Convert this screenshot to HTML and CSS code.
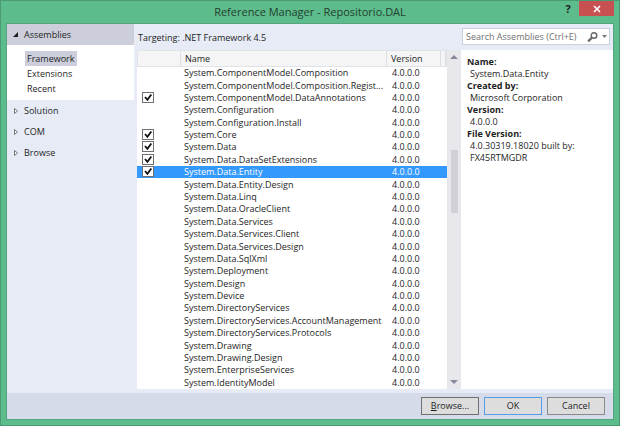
FILE: index.html
```html
<!DOCTYPE html>
<html lang="en">
<head>
<meta charset="utf-8">
<title>Reference Manager - Repositorio.DAL</title>
<link rel="stylesheet" href="styles.css">
</head>
<body>
<div class="window">
  <header class="titlebar">
    <h1>Reference Manager - Repositorio.DAL</h1>
    <div class="window-buttons">
      <button class="help" type="button">?</button>
      <button class="close" type="button" aria-label="Close"><svg width="8" height="8" viewBox="0 0 8 8"><path d="M1 1l6 6M7 1L1 7" stroke="#fff" stroke-width="1.6"/></svg></button>
    </div>
  </header>
  <div class="client">
    <main class="content">
      <nav class="sidebar">
        <button class="group open" type="button"><svg width="8" height="8" viewBox="0 0 8 8"><path d="M6 1v5H1z" fill="#1e1e1e"/></svg>Assemblies</button>
        <ul class="subitems">
          <li><a class="current" href="#framework">Framework</a></li>
          <li><a href="#extensions">Extensions</a></li>
          <li><a href="#recent">Recent</a></li>
        </ul>
        <button class="group" type="button"><svg width="8" height="8" viewBox="0 0 8 8"><path d="M2.5 1.5l3 2.5-3 2.5z" fill="#fff" stroke="#777"/></svg>Solution</button>
        <button class="group" type="button"><svg width="8" height="8" viewBox="0 0 8 8"><path d="M2.5 1.5l3 2.5-3 2.5z" fill="#fff" stroke="#777"/></svg>COM</button>
        <button class="group" type="button"><svg width="8" height="8" viewBox="0 0 8 8"><path d="M2.5 1.5l3 2.5-3 2.5z" fill="#fff" stroke="#777"/></svg>Browse</button>
      </nav>
      <section class="assemblies">
        <p class="targeting">Targeting: .NET Framework 4.5</p>
        <div class="list">
          <table>
            <thead><tr><th></th><th>Name</th><th>Version</th><th></th></tr></thead>
            <tbody id="rows"></tbody>
          </table>
          <div class="scrollbar">
            <svg width="8" height="4" viewBox="0 0 8 4"><path d="M0 4l4-4 4 4z" fill="#868999"/></svg>
            <div class="track"><div class="thumb"></div></div>
            <svg width="8" height="4" viewBox="0 0 8 4"><path d="M0 0l4 4 4-4z" fill="#868999"/></svg>
          </div>
        </div>
      </section>
      <aside class="side">
        <div class="search">
          <input type="text" placeholder="Search Assemblies (Ctrl+E)" aria-label="Search Assemblies">
          <svg width="12" height="12" viewBox="0 0 12 12"><circle cx="7" cy="4.5" r="2.8" fill="none" stroke="#666" stroke-width="1.4"/><path d="M4.8 6.8L1.2 10.4" stroke="#666" stroke-width="2.2"/></svg>
          <svg width="5" height="3" viewBox="0 0 5 3"><path d="M0 0h5L2.5 3z" fill="#777"/></svg>
        </div>
        <dl class="details">
          <dt>Name:</dt><dd>System.Data.Entity</dd>
          <dt>Created by:</dt><dd>Microsoft Corporation</dd>
          <dt>Version:</dt><dd>4.0.0.0</dd>
          <dt>File Version:</dt><dd>4.0.30319.18020 built by: FX45RTMGDR</dd>
        </dl>
      </aside>
    </main>
    <footer class="actions">
      <button class="browse" type="button"><u>B</u>rowse...</button>
      <button class="ok" type="button">OK</button>
      <button type="button">Cancel</button>
    </footer>
  </div>
</div>
<script src="app.js"></script>
</body>
</html>
```
FILE: styles.css
```css
* { box-sizing: border-box; margin: 0; padding: 0; }
body {
  font: 9px/12px "Open Sans", "Noto Sans", sans-serif;
  color: #1e1e1e;
}
button, input { font: inherit; color: inherit; border: 0; background: none; }
svg { display: block; flex: none; }
.window {
  display: flex;
  flex-direction: column;
  height: 100vh;
  padding: 0 5px 5px;
  background: #5cbc8c;
  border: 1px solid #4a9b73;
}
.titlebar {
  display: grid;
  grid-template-columns: 1fr auto 1fr;
  height: 22px;
  flex: none;
}
.titlebar h1 {
  grid-column: 2;
  font-size: 11px;
  font-weight: 400;
  line-height: 22px;
  color: #24402f;
}
.window-buttons { display: flex; justify-content: flex-end; align-items: start; }
.help { width: 22px; height: 15px; font-size: 11px; font-weight: 700; }
.close {
  display: flex;
  align-items: center;
  justify-content: center;
  width: 35px;
  height: 15px;
  background: #c75050;
}
.client {
  display: flex;
  flex-direction: column;
  flex: 1;
  min-height: 0;
  background: #e6ebf5;
  border: 1px solid #52a57c;
}
.content { display: flex; flex: 1; min-height: 0; padding-bottom: 4px; }
.sidebar { width: 127px; flex: none; }
.group {
  display: flex;
  align-items: center;
  gap: 4px;
  width: 100%;
  height: 21px;
  padding-left: 5px;
}
.group.open { background: #cccedb; }
.subitems {
  list-style: none;
  height: 55px;
  padding: 6px 0 0 18px;
  background: #fff;
}
.subitems li { height: 15px; }
.subitems a {
  display: inline-block;
  height: 15px;
  line-height: 15px;
  padding: 0 2px;
  color: inherit;
  text-decoration: none;
}
.subitems .current { background: #cccedb; }
.assemblies {
  display: flex;
  flex-direction: column;
  flex: 1;
  min-width: 0;
  padding-left: 3px;
}
.targeting { height: 26px; line-height: 28px; padding-left: 1px; flex: none; }
.list { display: flex; flex: 1; min-height: 0; background: #fff; }
table { display: flex; flex-direction: column; flex: 1; min-width: 0; }
thead { display: block; flex: none; }
tbody { display: grid; flex: 1; grid-auto-rows: 1fr; min-height: 0; }
tr {
  display: grid;
  grid-template-columns: 43px 1fr 54px 5px;
  align-items: center;
  min-height: 0;
}
thead tr { height: 17px; align-items: stretch; background: #f5f5f5; border: 1px solid #e0e3e8; }
th {
  font-weight: 400;
  text-align: left;
  line-height: 16px;
  padding-left: 4px;
  border-right: 1px solid #dcdfe6;
}
td {
  display: block;
  height: 12px;
  padding-left: 4px;
  overflow: hidden;
  white-space: nowrap;
  text-overflow: ellipsis;
}
td:first-child { padding-left: 5px; }
.selected { background: #3399ff; color: #fff; }
td input {
  appearance: none;
  display: block;
  width: 12px;
  height: 11px;
  border: 1px solid #707070;
  background: #fff url("data:image/svg+xml,%3Csvg xmlns='http://www.w3.org/2000/svg' viewBox='0 0 10 9'%3E%3Cpath d='M2 4l2.4 2.8L8.3 1.5' fill='none' stroke='%23111' stroke-width='1.8'/%3E%3C/svg%3E") center / 10px 9px no-repeat;
}
.scrollbar {
  display: flex;
  flex-direction: column;
  align-items: center;
  width: 14px;
  flex: none;
  padding: 5px 0;
  background: #e8e8ec;
}
.track {
  display: grid;
  grid-template-rows: 91fr 63fr 167fr;
  flex: 1;
}
.thumb { grid-row: 2; width: 7px; background: #d0d1d7; }
.side { display: flex; flex-direction: column; width: 152px; flex: none; }
.search {
  display: flex;
  align-items: center;
  gap: 3px;
  height: 17px;
  margin: 4px 3px 5px 1px;
  padding: 0 2px 0 3px;
  background: #fff;
  border: 1px solid #cccedb;
}
.search input { flex: 1; min-width: 0; height: 14px; outline: none; }
.search input::placeholder { color: #717171; opacity: 1; }
.details { flex: 1; padding: 6px; background: #fff; }
dt { font-weight: 700; }
dd { padding: 0 24px 0 3px; }
.actions {
  display: flex;
  justify-content: flex-end;
  align-items: center;
  gap: 5px;
  height: 26px;
  flex: none;
  padding-right: 8px;
  background: #d6dbe9;
}
.actions button {
  width: 58px;
  height: 18px;
  background: #ddd;
  border: 1px solid #8a8a8a;
}
.actions .browse { border-color: #707070; }
.actions .ok { border-color: #569de5; }
```
FILE: app.js
```js
const names = [
  "ComponentModel.Composition", "ComponentModel.Composition.Regist...",
  "ComponentModel.DataAnnotations", "Configuration", "Configuration.Install",
  "Core", "Data", "Data.DataSetExtensions", "Data.Entity", "Data.Entity.Design",
  "Data.Linq", "Data.OracleClient", "Data.Services", "Data.Services.Client",
  "Data.Services.Design", "Data.SqlXml", "Deployment", "Design", "Device",
  "DirectoryServices", "DirectoryServices.AccountManagement",
  "DirectoryServices.Protocols", "Drawing", "Drawing.Design",
  "EnterpriseServices", "IdentityModel"
];
const checked = ["ComponentModel.DataAnnotations", "Core", "Data", "Data.DataSetExtensions", "Data.Entity"];

document.getElementById("rows").innerHTML = names.map(name => {
  const full = "System." + name;
  const box = checked.includes(name) ? `<input type="checkbox" checked aria-label="${full}">` : "";
  const cls = name === "Data.Entity" ? ' class="selected"' : "";
  return `<tr${cls}><td>${box}</td><td>${full}</td><td>4.0.0.0</td></tr>`;
}).join("");
```
